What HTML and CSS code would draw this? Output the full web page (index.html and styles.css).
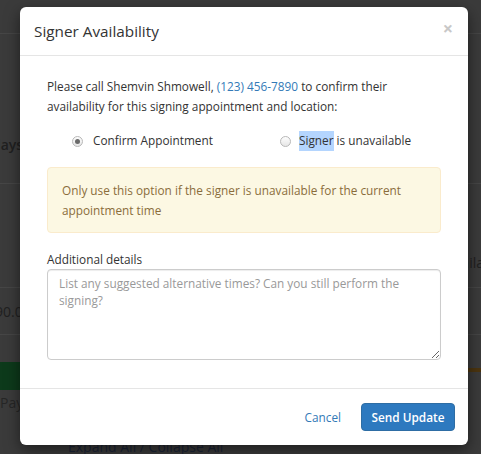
FILE: index.html
```html
<!DOCTYPE html>
<html>
<head>
<meta charset="utf-8">
<link rel="stylesheet" href="styles.css">
</head>
<body>
<div class="page">
  <div class="row r1"></div>
  <div class="row r2"><span class="bgtext cut">days</span></div>
  <div class="row r3"><span class="bgtext right">Availa</span></div>
  <div class="row r4"><span class="bgtext cut2">$90.00</span></div>
  <div class="row r5"></div>
  <div class="row r6"><div class="green"></div><div class="brown"></div></div>
  <div class="row r7"><span class="bgtext cut3">Pay</span></div>
  <div class="row r8"><span class="bgtext expand">Expand All / Collapse All</span></div>
</div>

<div class="modal">
  <div class="modal-header">
    <h4 class="modal-title">Signer Availability</h4>
    <span class="close">&times;</span>
  </div>
  <div class="modal-body">
    <p class="intro">Please call Shemvin Shmowell, <a class="link">(123) 456-7890</a> to confirm their availability for this signing appointment and location:</p>
    <div class="radios">
      <label class="radio r-first"><span class="dot checked"></span>Confirm Appointment</label>
      <label class="radio r-second"><span class="dot"></span><span class="sel">Signer</span>&nbsp;is unavailable</label>
    </div>
    <div class="alert">Only use this option if the signer is unavailable for the current appointment time</div>
    <label class="field-label">Additional details</label>
    <textarea class="details" placeholder="List any suggested alternative times? Can you still perform the signing?"></textarea>
  </div>
  <div class="modal-footer">
    <a class="cancel">Cancel</a>
    <button class="btn-primary">Send Update</button>
  </div>
</div>
</body>
</html>
```

FILE: styles.css
```css
* { box-sizing: border-box; }
html, body { margin: 0; padding: 0; }
body {
  background: #3b3b3b;
  font-family: "Open Sans", "Liberation Sans", sans-serif;
  width: 481px;
  height: 454px;
  overflow: hidden;
  position: relative;
}
.page { display: flex; flex-direction: column; }
.row {
  border-bottom: 1px solid #464646;
  display: flex;
  align-items: flex-start;
  line-height: 20px;
}
.r1 { height: 34px; }
.r2 { height: 150px; padding-top: 101px; }
.r3 { height: 104px; padding-top: 69px; justify-content: flex-end; }
.r4 { height: 47px; padding-top: 14px; }
.r5 { height: 27px; border-bottom: none; }
.r6 { height: 28px; border-bottom: none; align-items: stretch; justify-content: space-between; }
.r7 { height: 46px; padding-top: 3px; border-bottom: none; }
.r8 { height: 18px; padding-top: 1px; border-bottom: none; }
.bgtext { color: #202020; font-size: 14px; white-space: nowrap; }
.cut { margin-left: -8px; font-weight: 600; }
.right { margin-right: -3px; }
.cut2 { margin-left: -13px; }
.cut3 { color: #262626; }
.green { width: 40px; background: #0d3a1b; }
.brown { width: 30px; height: 4px; background: #4b3510; margin-top: 6px; }
.expand { margin-left: 68px; color: #1b2436; }

.modal {
  position: absolute;
  left: 20px;
  top: 7px;
  width: 448px;
  height: 438px;
  background: #fff;
  border-radius: 6px;
  box-shadow: 0 5px 15px rgba(0,0,0,0.5);
  display: flex;
  flex-direction: column;
  color: #333;
}
.modal-header {
  height: 49px;
  border-bottom: 1px solid #e5e5e5;
  display: flex;
  align-items: center;
  justify-content: space-between;
  padding: 0 14px 1px 14px;
}
.modal-title {
  margin: 0;
  font-size: 15.3px;
  font-weight: 400;
  color: #333;
}
.close {
  font-size: 18px;
  font-weight: 700;
  color: #c8c8c8;
  line-height: 1;
  margin-top: -5px;
  margin-right: 1px;
}
.modal-body {
  padding: 21px 27px 0 27px;
  font-size: 11.8px;
  line-height: 19.5px;
  height: 332px;
}
.intro { margin: 0; }
.link { color: #337ab7; text-decoration: none; }
.radios {
  display: flex;
  margin-top: 15px;
  height: 20px;
  align-items: center;
}
.radio { display: flex; align-items: center; }
.r-first { margin-left: 25px; width: 208px; }
.dot {
  width: 11px;
  height: 11px;
  border-radius: 50%;
  border: 1px solid #b8b8b8;
  background: linear-gradient(#fdfdfd, #e6e6e6);
  margin-right: 10px;
  display: flex;
  align-items: center;
  justify-content: center;
}
.dot.checked::after {
  content: "";
  width: 5px;
  height: 5px;
  border-radius: 50%;
  background: #6a6a6a;
}
.r-second .dot { margin-right: 8px; }
.sel { background: #b4d5fe; }
.alert {
  margin-top: 16px;
  background: #fcf8e3;
  border: 1px solid #faebcc;
  border-radius: 4px;
  color: #8a6d3b;
  padding: 12px 14px 12px 14px;
  line-height: 20px;
}
.field-label { display: block; margin-top: 16px; line-height: 20px; }
.details {
  display: block;
  width: 100%;
  height: 91px;
  margin: 0;
  border: 1px solid #ccc;
  border-radius: 4px;
  padding: 5px 11px;
  font-family: "Open Sans", "Liberation Sans", sans-serif;
  font-size: 11.8px;
  line-height: 17px;
  box-shadow: inset 0 1px 1px rgba(0,0,0,0.075);
  resize: vertical;
}
.details::placeholder { color: #999; }
.modal-footer {
  flex: 1;
  border-top: 1px solid #e5e5e5;
  display: flex;
  justify-content: flex-end;
  align-items: center;
  padding: 0 13px 0 0;
}
.cancel { color: #337ab7; font-size: 11.8px; margin-right: 20px; }
.btn-primary {
  width: 94px;
  height: 28px;
  background: #2d79bf;
  border: 1px solid #2e6da4;
  border-radius: 4px;
  color: #fff;
  font-family: "Open Sans", "Liberation Sans", sans-serif;
  font-size: 11.8px;
  font-weight: 600;
  padding: 0;
}
```
